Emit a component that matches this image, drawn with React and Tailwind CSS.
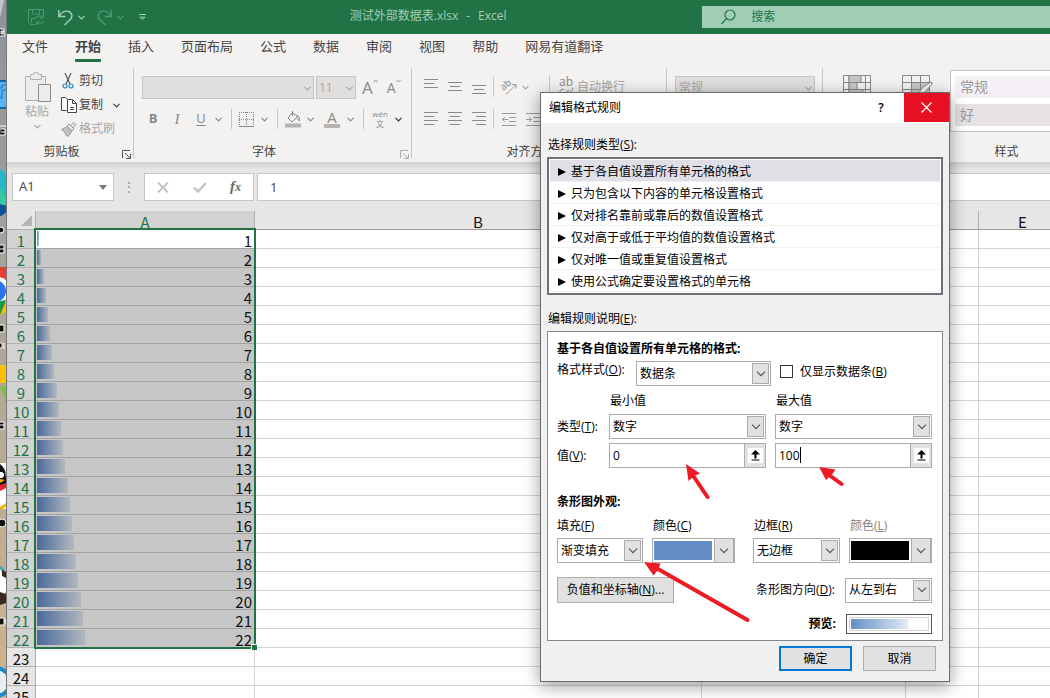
import React, { useState } from 'react';

const TABS = ['文件', '开始', '插入', '页面布局', '公式', '数据', '审阅', '视图', '帮助', '网易有道翻译'];

const COLUMNS = [
    { name: 'A', width: 'w-[219px]' },
    { name: 'B', width: 'w-[447px]' },
    { name: 'C', width: 'w-[204px]' },
    { name: 'D', width: 'w-[73px]' },
    { name: 'E', width: 'w-[88px]' },
    { name: 'F', width: 'w-[88px] hidden xl:table-cell' },
    { name: 'G', width: 'w-[88px] hidden xl:table-cell' },
    { name: 'H', width: 'w-[88px] hidden xl:table-cell' },
];

const ROWS = Array.from({ length: 25 }, (_, i) => i + 1);
const LAST_VALUE = 22;

const RULE_TYPES = [
    '基于各自值设置所有单元格的格式',
    '只为包含以下内容的单元格设置格式',
    '仅对排名靠前或靠后的数值设置格式',
    '仅对高于或低于平均值的数值设置格式',
    '仅对唯一值或重复值设置格式',
    '使用公式确定要设置格式的单元格',
];

const Chevron = ({ className = 'text-[#999]' }) => (
    <svg width="7" height="5" viewBox="0 0 7 5" className={`shrink-0 ${className}`} fill="none" stroke="currentColor" strokeWidth="1.2">
        <path d="M0.5 0.8 3.5 3.8 6.5 0.8" />
    </svg>
);

const Lines = ({ align, rows = 4 }) => {
    const widths = rows === 4 ? [14, 10, 14, 10] : [14, 10, 14];
    return (
        <svg width="14" height={rows === 4 ? 14 : 11} className="text-[#8a8a8a]" stroke="currentColor" shapeRendering="crispEdges">
            {widths.map((w, i) => {
                const x = align === 'left' ? 0 : align === 'right' ? 14 - w : (14 - w) / 2;
                return <path key={i} d={`M${x} ${i * 4 + 0.5}h${w}`} />;
            })}
        </svg>
    );
};

const Launcher = ({ className }) => (
    <svg width="9" height="9" viewBox="0 0 9 9" className={className} fill="none" stroke="currentColor">
        <path d="M0.5 8V0.5H8M3 3l5 5M8.5 4v4.5H4" />
    </svg>
);

/* Icons on the desktop that stick out left of the window */
const DesktopStrip = () => (
    <div className="w-[6px] shrink-0 overflow-hidden bg-linear-to-b from-[#8d929b] via-[#a8a39b] via-40% to-[#d0b48a]" aria-hidden="true">
        <svg width="6" height="698" viewBox="0 0 6 698">
            <path d="M0 0h4L0 18z" fill="#c4c4c6" />
            <path d="M0 29h4v2H1v3h4v2H0M2 32h3" stroke="#fff" fill="#111" />
            <path d="M0 80h6v29H0z" fill="#0b62a4" />
            <path d="M0 82h6v25H0z" fill="#58b6f2" />
            <path d="M0 88h2v-3h4M0 98h2v-8h4" stroke="#146fc0" fill="none" />
            <path d="M0 126h6M1 129h4v6H0M1 132h4" stroke="#fff" fill="#111" />
            <path d="M0 169q5 2 6 8v32H0z" fill="#28b7c8" />
            <path d="M0 187q4 8 6 10v10H0z" fill="#34c9a2" />
            <path d="M0 204q5 2 6 1v7q-3 4-6 4z" fill="#0d5299" />
            <path d="M0 227q4 0 4 3t-4 3M0 245h4v8H0M0 249h4" stroke="#fff" fill="#111" />
            <path d="M0 267h6v14H0z" fill="#e43f35" />
            <circle cx="-3" cy="291" r="14" fill="#fff" />
            <circle cx="-5" cy="291" r="11" fill="#2a75ee" />
            <path d="M0 301l6-1-4 14H0z" fill="#199746" />
            <path d="M6 301v11l-6 3z" fill="#fbbc05" />
            <path d="M0 325h4v7H0M0 343h2v5H0M4 343v6" stroke="#fff" fill="#111" />
            <path d="M0 365h6v18H0z" fill="#ffc107" />
            <path d="M0 386h6v17z" fill="#7dc242" />
            <path d="M0 422h4v7H0M0 425h4" stroke="#fff" fill="#111" />
            <path d="M0 463h6v46H0z" fill="#fff" />
            <path d="M0 464q6 4 6 14v9H0z" fill="#111" />
            <circle cx="1" cy="475" r="3" fill="#fff" />
            <path d="M0 479l5 1-5 3z" fill="#f4b400" />
            <path d="M0 485l6-2v5l-6 3z" fill="#e4252b" />
            <path d="M0 507l6-4v3l-3 3H0z" fill="#f4b400" />
            <circle cx="2" cy="523" r="4" stroke="#fff" fill="#111" />
            <circle cx="-14" cy="585" r="24" fill="#45a8b0" />
            <circle cx="-14" cy="585" r="21" fill="#fff" />
            <path d="M2 570l4 2v6l-4-2zM0 592l6 2v9l-6 2z" fill="#3a2922" />
            <path d="M0 618h4v7H0M5 619l1 5" stroke="#fff" fill="#111" />
            <circle cx="-4" cy="682" r="16" fill="#1688d0" />
            <circle cx="-4" cy="682" r="12" fill="#e9eef2" />
        </svg>
    </div>
);

const TitleBar = () => (
    <header className="flex h-[34px] shrink-0 items-center bg-[#217346] text-[#a3cfb5]">
        <div className="flex w-[147px] shrink-0 items-center pl-[21px]">
            <button aria-label="保存" className="text-[#4f9a70]">
                <svg width="16" height="16" viewBox="0 0 16 16" fill="none" stroke="currentColor">
                    <path d="M6.5 15.5h-4l-2-2V.5h15v6M4.500.5v4.500h7V.5M3.500 14V9.500h3.500M7.500 9.500a4 4 0 0 1 7-1M15 6v3h-3M15.500 12a4 4 0 0 1-7 1.500M8.500 16v-3h3" />
                </svg>
            </button>
            <button aria-label="撤消" className="ml-[14px] text-[#a3cfb5]">
                <svg width="15" height="17" viewBox="0 0 15 17" fill="none" stroke="currentColor" strokeWidth="1.4">
                    <path d="M.8 1v6.500h6.500M1 7.300C3 4 6 1.500 10 2.300c4 1 5 5 2.500 8L6.500 16" />
                </svg>
            </button>
            <Chevron className="ml-[5px] text-[#a3cfb5]" />
            <button aria-label="恢复" className="ml-[12px] text-[#4f9a70]">
                <svg width="15" height="17" viewBox="0 0 15 17" fill="none" stroke="currentColor" strokeWidth="1.4">
                    <path d="M14.200 1v6.500H7.700M14 7.300C12 4 9 1.500 5 2.300c-4 1-5 5-2.500 8L8.500 16" />
                </svg>
            </button>
            <Chevron className="ml-[5px] text-[#4f9a70]" />
            <button aria-label="自定义快速访问工具栏" className="ml-[14px]">
                <svg width="9" height="7" viewBox="0 0 9 7" fill="none" stroke="currentColor">
                    <path d="M1 .5h7M2 3.200l2.500 2.500L7 3.200z" />
                </svg>
            </button>
        </div>
        <div className="flex flex-1 justify-center gap-2 pb-[2px] text-[12px]">
            <span>测试外部数据表.xlsx</span>
            <span>-</span>
            <span>Excel</span>
        </div>
        <label className="flex h-[22px] w-1/3 shrink-0 items-center bg-[#a0cdb6] pl-[19px] text-[#217346]">
            <svg width="15" height="16" viewBox="0 0 15 16" fill="none" stroke="currentColor" strokeWidth="1.2">
                <circle cx="9" cy="6" r="5" />
                <path d="M5.500 9.500.5 15" />
            </svg>
            <input aria-label="搜索" placeholder="搜索" className="ml-[15px] min-w-0 flex-1 bg-transparent text-[12px] outline-none placeholder:text-[#217346]" />
        </label>
    </header>
);

const GroupLabel = ({ children, launcher }) => (
    <div className="flex h-[20px] items-center text-[12px] text-[#444]">
        <span className="flex-1 text-center">{children}</span>
        {launcher && <Launcher className={`mt-[4px] mr-[2px] ml-[6px] ${launcher}`} />}
    </div>
);

const Divider = ({ className }) => <div className={`w-px shrink-0 bg-[#c8c6c4] ${className}`} />;

const Ribbon = () => (
    <div className="flex h-[98px] shrink-0 overflow-hidden bg-[#f3f2f1] pt-[4px] text-[#a8a6a4]">
        <section className="flex w-[126px] shrink-0 flex-col">
            <div className="flex h-[74px] pt-[4px] pl-[16px]">
                <button className="flex w-[28px] flex-col items-center text-[12px] leading-[16px]">
                    <svg width="28" height="32" viewBox="0 0 28 32" fill="#eeecea" stroke="#b0aeac">
                        <path d="M2.500 4.500h20v24h-20z" />
                        <path d="M7.500 7.500v-5h3a2.500 2.500 0 0 1 5 0h3v5z" />
                        <path d="M15.500 12.500h12v17h-12z" stroke="#8f8d8b" />
                    </svg>
                    <span className="whitespace-nowrap">粘贴</span>
                    <Chevron className="mt-[4px] text-[#a8a6a4]" />
                </button>
                <div className="ml-[10px] flex flex-col gap-[6px] text-[12px] leading-[18px] text-[#444]">
                    <button className="flex items-center gap-[4px]">
                        <svg width="14" height="16" viewBox="0 0 14 16" fill="none" stroke="#555" strokeWidth="1.200">
                            <path d="M4 0l5 11M10 0L5 11" />
                            <circle cx="4" cy="13" r="2" stroke="#2b88c8" />
                            <circle cx="10" cy="13" r="2" stroke="#2b88c8" />
                        </svg>
                        剪切
                    </button>
                    <button className="flex items-center gap-[2px]">
                        <svg width="16" height="16" viewBox="0 0 16 16" fill="#fff" stroke="#444">
                            <path d="M5.500 13.500h-5V.5h4l2 2" />
                            <path d="M6.500 2.500h5l4 4v9h-9zM11.500 2.500v4h4M9 10.500h4M9 12.500h4" />
                        </svg>
                        复制
                        <Chevron className="ml-[8px] text-[#444]" />
                    </button>
                    <button className="flex items-center gap-[2px] text-[#a8a6a4]">
                        <svg width="16" height="15" viewBox="0 0 16 15" fill="#c4c2c0" stroke="#999">
                            <path d="M.5 7.500l5-2.500 5 5-3.500 4.500-2-1.500-1-2.500z" />
                            <path d="M6 4l2-2 5 5-2 2zM9.500 3.500l3.500-3 2 2-3 3.500z" fill="#e8e6e4" />
                        </svg>
                        格式刷
                    </button>
                </div>
            </div>
            <GroupLabel launcher="text-[#555]">剪贴板</GroupLabel>
        </section>
        <Divider className="h-[90px]" />
        <section className="flex w-[277px] shrink-0 flex-col">
            <div className="h-[74px] pt-[8px] pl-[8px]">
                <div className="flex items-center">
                    <div className="relative">
                        <select aria-label="字体" className="block h-[23px] w-[172px] appearance-none border border-[#c8c6c4] bg-[#e1dfdd]" />
                        <Chevron className="pointer-events-none absolute top-[10px] right-[3px]" />
                    </div>
                    <div className="relative ml-[2px]">
                        <select aria-label="字号" className="block h-[23px] w-[40px] appearance-none border border-[#c8c6c4] bg-[#e1dfdd] pl-[2px] text-[12px] text-[#a8a6a4]">
                            <option>11</option>
                        </select>
                        <Chevron className="pointer-events-none absolute top-[10px] right-[3px]" />
                    </div>
                    <button aria-label="增大字号" className="ml-[6px] flex items-start text-[17px] leading-[18px] text-[#888]">A<svg width="5" height="4" fill="none" stroke="currentColor"><path d="M0 3.500l2.500-2.500L5 3.500" /></svg></button>
                    <button aria-label="减小字号" className="ml-[9px] flex items-start text-[14px] leading-[18px] text-[#888]">A<svg width="5" height="4" fill="none" stroke="currentColor"><path d="M0 .5l2.500 2.500L5 .5" /></svg></button>
                </div>
                <div className="mt-[10px] flex h-[20px] items-center text-[13px] text-[#8a8886]">
                    <button className="w-[22px] font-bold">B</button>
                    <button className="ml-[2px] w-[22px] font-['Liberation_Serif',serif] text-[14px] italic">I</button>
                    <button className="ml-[2px] w-[22px] underline underline-offset-2">U</button>
                    <Chevron className="ml-[3px]" />
                    <Divider className="ml-[9px] h-[20px]" />
                    <svg className="ml-[7px]" width="15" height="15" viewBox="0 0 15 15" fill="none" stroke="#8a8886">
                        <path d="M.5 0v14M14.500 0v14M7.500 0v14M0 .5h15M0 7.500h15" strokeDasharray="1 1" />
                        <path d="M0 14.500h15" />
                    </svg>
                    <Chevron className="ml-[7px]" />
                    <Divider className="ml-[9px] h-[20px]" />
                    <svg className="ml-[7px]" width="17" height="17" viewBox="0 0 17 17" fill="none" stroke="#8a8886">
                        <path d="M7.500 1.500L3 7l4 4 5.500-5.500-5-4zM7.500 0v5M12 4q3 1 2.500 6l-3-3" />
                        <path d="M0 14.500h16" strokeWidth="4" stroke="#b5b3b1" />
                    </svg>
                    <Chevron className="ml-[5px]" />
                    <button aria-label="字体颜色" className="ml-[10px] flex h-[17px] w-[16px] items-center justify-center border-b-4 border-[#b5b3b1] text-[15px] leading-[13px]">A</button>
                    <Chevron className="ml-[7px]" />
                    <Divider className="ml-[9px] h-[20px]" />
                    <button aria-label="拼音指南" className="ml-[8px] flex w-[16px] flex-col items-center text-[8px] leading-[10px]">
                        <span>wén</span>
                        <span>文</span>
                    </button>
                    <Chevron className="ml-[7px] text-[#333]" />
                </div>
            </div>
            <GroupLabel launcher="text-[#b0aeac]">字体</GroupLabel>
        </section>
        <Divider className="h-[90px]" />
        <section className="flex w-[254px] shrink-0 flex-col">
            <div className="h-[74px] pt-[7px] pl-[12px]">
                <div className="flex h-[24px] items-center gap-[10px]">
                    <div className="pb-[5px]"><Lines align="left" rows={3} /></div>
                    <div><Lines align="center" rows={3} /></div>
                    <div className="pt-[7px]"><Lines align="center" rows={3} /></div>
                    <Divider className="-ml-[3px] h-[20px]" />
                    <svg className="-ml-[3px] overflow-visible" width="17" height="16" viewBox="0 0 17 16" fill="none" stroke="#999">
                        <text x="0" y="10" fontSize="10" fill="#888" stroke="none" transform="rotate(-40 4 8)">ab</text>
                        <path d="M5 15.500L15 5.500M11 5.500h4v4" />
                    </svg>
                    <Chevron className="-ml-[6px]" />
                    <Divider className="ml-[10px] h-[24px]" />
                    <button className="-ml-[1px] flex items-center gap-[3px] text-[12px] whitespace-nowrap">
                        <svg width="15" height="18" viewBox="0 0 15 18" className="overflow-visible" fill="none" stroke="#8a8886">
                            <text x="0" y="8" fontSize="12" fill="#8a8886" stroke="none">ab</text>
                            <path d="M5 11.500q-4-1-4 2.500t4 3M13.500 9.500q1 5-6 5M10 11.500l-3 3 3 3" />
                        </svg>
                        自动换行
                    </button>
                </div>
                <div className="mt-[8px] flex h-[24px] items-center gap-[10px]">
                    <Lines align="left" />
                    <Lines align="center" />
                    <Lines align="right" />
                    <Divider className="-ml-[3px] h-[20px]" />
                    <svg className="-ml-[2px]" width="14" height="13" fill="none" stroke="#999"><path d="M0 .5h14M7 4.500h7M7 8.500h7M0 12.500h14M6 6.500H.5M3 4L.5 6.500 3 9" /></svg>
                    <svg width="14" height="13" fill="none" stroke="#999"><path d="M0 .5h14M7 4.500h7M7 8.500h7M0 12.500h14M0 6.500h5.500M3 4l2.500 2.500L3 9" /></svg>
                </div>
            </div>
            <GroupLabel launcher="text-[#b0aeac]">对齐方式</GroupLabel>
        </section>
        <Divider className="h-[90px]" />
        <section className="flex w-[155px] shrink-0 flex-col">
            <div className="relative h-[74px] pt-[8px] pl-[8px]">
                <select aria-label="数字格式" className="block h-[23px] w-[140px] appearance-none border border-[#c8c6c4] bg-[#e1dfdd] pl-[3px] text-[12px] text-[#a8a6a4]">
                    <option>常规</option>
                </select>
                <Chevron className="pointer-events-none absolute top-[18px] right-[10px]" />
            </div>
            <GroupLabel launcher="text-[#b0aeac]">数字</GroupLabel>
        </section>
        <Divider className="h-[90px]" />
        <section className="flex w-[367px] shrink-0 flex-col">
            <div className="flex h-[74px] pt-[2px] pl-[20px]">
                <svg className="mt-[5px] shrink-0" width="28" height="28" viewBox="0 0 28 28" fill="#f3f2f1" stroke="#8a8886">
                    <path d="M.5 .5h27v27H.5z" />
                    <path d="M.5 7.500h27M.5 14.500h27M.5 21.500h27M6 .5v27M22.500 .5v27" />
                    <path d="M6 .5h12v7H6zM6 7.500h8v7H6zM6 14.500h14v7H6z" fill="#c8c6c4" />
                </svg>
                <svg className="mt-[5px] ml-[31px] shrink-0" width="31" height="28" viewBox="0 0 31 28" fill="none" stroke="#8a8886">
                    <path d="M10 8h17v14H10z" fill="#c8c6c4" stroke="none" />
                    <path d="M.5 .5h27v27H.5zM.5 7.500h27M.5 14.500h27M9.500 .5v27M18.500 .5v27" />
                    <path d="M14 22l6-9 9-6q2 0 1 2l-7 8-6 5z" fill="#f3f2f1" />
                </svg>
                <div className="ml-[17px] flex h-[62px] flex-1 flex-col gap-[6px] border border-[#c8c6c4] bg-white px-[4px] py-[5px] text-[14px] text-[#999]">
                    <button className="h-[22px] bg-[#f5f0f6] pl-[5px] text-left leading-[22px]">常规</button>
                    <button className="h-[22px] bg-[#e6e1e5] pl-[5px] text-left leading-[22px]">好</button>
                </div>
            </div>
            <GroupLabel>样式</GroupLabel>
        </section>
    </div>
);

const FormulaBar = () => (
    <div className="flex h-[49px] shrink-0 items-start bg-linear-to-b from-[#cfcfcf] to-[#e6e6e6] to-15% pt-[11px] pl-[5px] text-[13px] text-[#444]">
        <div className="flex h-[28px] w-[102px] shrink-0 items-center border border-[#c6c6c6] bg-white pr-[6px] pl-[6px]">
            <input aria-label="名称框" defaultValue="A1" className="min-w-0 flex-1 outline-none" />
            <svg width="8" height="5" fill="#777"><path d="M0 0h8L4 5z" /></svg>
        </div>
        <svg className="mx-[14px] mt-[9px] shrink-0" width="2" height="11" fill="#aaa"><path d="M0 0h2v2H0zM0 4h2v2H0zM0 9h2v2H0z" /></svg>
        <div className="flex h-[28px] w-[110px] shrink-0 items-center justify-between border border-[#c6c6c6] bg-white pr-[12px] pl-[12px]">
            <button aria-label="取消输入"><svg width="12" height="11" fill="none" stroke="#c2c2c2" strokeWidth="1.800"><path d="M1 .5l10 10M11 .5l-10 10" /></svg></button>
            <button aria-label="输入"><svg width="14" height="11" fill="none" stroke="#c2c2c2" strokeWidth="2.400"><path d="M1 5.500l4 4L13 1" /></svg></button>
            <button aria-label="插入函数" className="pb-[2px] font-['Liberation_Serif',serif] text-[15px] leading-[18px] font-bold text-[#666] italic">f<span className="text-[12px]">x</span></button>
        </div>
        <input aria-label="编辑栏" defaultValue="1" className="ml-[3px] h-[28px] min-w-0 flex-1 border border-r-0 border-[#c6c6c6] bg-white pl-[12px] outline-none" />
    </div>
);

const SheetRow = ({ n }) => {
    const selected = n <= LAST_VALUE;
    const line = selected ? 'border-b-[#a3a3a3]' : 'border-b-[#d4d4d4]';
    return (
        <tr className="h-[19px]">
            <th scope="row" className={`border-r border-b border-[#b0b0b0] p-0 pt-[3px] font-normal ${selected ? 'bg-[#d2d2d2] text-[#217346]' : 'bg-[#e6e6e6]'}`}>{n}</th>
            <td className={`relative border-r border-r-[#d4d4d4] border-b p-0 pt-[3px] pr-[2px] text-right ${line} ${selected && n > 1 ? 'bg-[#c6c6c6]' : 'bg-white'}`}>
                {selected && (
                    <>
                        <div
                            className={`absolute top-px left-px h-[15px] bg-linear-to-r ${n > 1 ? 'from-[#4a6a9a] to-[#b3b8be]' : 'from-[#638ec6] to-[#a9c1e0]'}`}
                            style={{ width: `${n}%` }}
                        />
                        <span className="relative">{n}</span>
                    </>
                )}
            </td>
            {COLUMNS.slice(1).map(({ name, width }) => (
                <td key={name} className={`border-r border-b border-[#d4d4d4] p-0 ${width}`} />
            ))}
        </tr>
    );
};

const Sheet = () => (
    <div className="relative min-h-0 flex-1 overflow-hidden bg-white">
        <table className="w-max table-auto border-separate border-spacing-0 font-['Noto_Sans_CJK_SC',sans-serif] text-[15px] leading-[15px] text-[#111]">
            <thead>
                <tr className="h-[19px]">
                    <th aria-label="全选" className="w-[29px] min-w-[29px] border-r border-b border-[#b0b0b0] bg-[#e6e6e6] p-0 pl-[14px]">
                        <svg width="11" height="11" fill="#b4b4b4"><path d="M11 0v11H0z" /></svg>
                    </th>
                    {COLUMNS.map(({ name, width }) => (
                        <th key={name} scope="col" className={`border-r border-b border-r-[#b0b0b0] border-b-[#999] p-0 pt-[3px] font-normal ${width} ${name === 'A' ? 'bg-[#d2d2d2] text-[#217346]' : 'bg-[#e6e6e6]'}`}>{name}</th>
                    ))}
                </tr>
            </thead>
            <tbody>
                {ROWS.map((n) => <SheetRow key={n} n={n} />)}
            </tbody>
        </table>
        {/* Selection frame with its fill handle */}
        <div className="pointer-events-none absolute top-[17px] left-[27px] h-[421px] w-[222px] border-2 border-[#217346]">
            <div className="absolute -right-[3px] -bottom-[3px] h-[6px] w-[6px] border-t border-l border-white bg-[#217346]" />
        </div>
    </div>
);

const DropArrow = () => (
    <svg width="10" height="6" viewBox="0 0 10 6" fill="none" stroke="#555" strokeWidth="1.200"><path d="M1 .7l4 4 4-4" /></svg>
);

const Combo = ({ id, value, className = '' }) => (
    <div className={`relative ${className}`}>
        <select id={id} className="block h-[25px] w-full appearance-none border border-[#acacac] bg-white pl-[3px] text-[12px] outline-none">
            <option>{value}</option>
        </select>
        <span className="pointer-events-none absolute top-[2px] right-[2px] flex h-[21px] w-[17px] items-center justify-center border border-[#acacac] bg-[#e1e1e1]">
            <DropArrow />
        </span>
    </div>
);

const ColorPicker = ({ id, color }) => (
    <button id={id} className="flex h-[25px] w-[83px] border border-[#acacac] bg-white">
        <span className={`m-[2px] ml-px flex-1 self-stretch ${color}`} />
        <span className="flex h-full w-[20px] items-center justify-center border-r border-l border-[#acacac] bg-[#e1e1e1]"><DropArrow /></span>
    </button>
);

const RefInput = ({ label, value, onChange }) => (
    <div className="flex h-[25px] border border-[#acacac] bg-white">
        <input aria-label={label} value={value} onChange={onChange} className="w-0 min-w-0 flex-1 pl-[3px] text-[12px] outline-none" />
        <button aria-label="选择区域" className="flex w-[21px] shrink-0 items-center justify-center border-l border-[#acacac] bg-[#e1e1e1]">
            <svg width="15" height="15" viewBox="0 0 15 15">
                <path d="M0 0h15v15H0z" fill="#fff" />
                <path d="M7.500 2L12 6.500H8.500v4h-2v-4H3z" fill="#000" />
                <path d="M3.500 12h8" stroke="#000" />
            </svg>
        </button>
    </div>
);

const RuleDialog = () => {
    const [selected, setSelected] = useState(0);
    const [min, setMin] = useState('0');
    const [max, setMax] = useState('100');

    return (
        <div role="dialog" aria-labelledby="dialog-title" className="absolute top-[92px] left-[540px] w-[410px] border border-[#6b6b6b] bg-[#f0f0f0] text-[12px] leading-[18px] text-black shadow-[0_4px_16px_rgba(0,0,0,0.4)]">
            <div className="flex h-[30px] items-start bg-white">
                <h2 id="dialog-title" className="flex-1 self-center pl-[8px]">编辑格式规则</h2>
                <button aria-label="帮助" className="h-[29px] w-[46px] font-semibold">?</button>
                <button aria-label="关闭" className="flex h-[29px] w-[45px] items-center justify-center bg-[#e81123]">
                    <svg width="11" height="11" fill="none" stroke="#fff" strokeWidth="1.200"><path d="M.5 .5l10 10M10.500 .5l-10 10" /></svg>
                </button>
            </div>

            <div className="px-[6px] pt-[13px] pb-[10px]">
                <h3 className="pl-px">选择规则类型(<u>S</u>):</h3>
                <ul className="mt-[3px] border-2 border-[#6d7178] bg-white p-px">
                    {RULE_TYPES.map((rule, i) => (
                        <li key={rule}>
                            <button
                                onClick={() => setSelected(i)}
                                className={`flex h-[22px] w-full items-center gap-[5px] border-b border-[#f0f0f0] pt-[2px] pl-[8px] ${selected === i ? 'bg-[#e0dfe5]' : ''}`}
                            >
                                <svg width="8" height="8"><path d="M0 0l8 4-8 4z" /></svg>
                                {rule}
                            </button>
                        </li>
                    ))}
                </ul>

                <h3 className="mt-[15px] pl-px">编辑规则说明(<u>E</u>):</h3>
                <div className="mt-[3px] border border-[#828790] bg-white pt-[8px] pr-[10px] pb-[6px] pl-[9px]">
                    <h4 className="font-bold">基于各自值设置所有单元格的格式:</h4>
                    <div className="mt-[3px] flex items-start">
                        <label htmlFor="style" className="w-[79px]">格式样式(<u>O</u>):</label>
                        <Combo id="style" value="数据条" className="w-[135px]" />
                        <input id="only-bar" type="checkbox" className="mt-[4px] ml-[9px] h-[13px] w-[13px] appearance-none border border-[#333] bg-white checked:bg-[#0078d7]" />
                        <label htmlFor="only-bar" className="mt-[2px] ml-[7px]">仅显示数据条(<u>B</u>)</label>
                    </div>

                    <div className="mt-[6px] grid grid-cols-[43px_minmax(0,1fr)_minmax(0,1fr)] items-center gap-x-[9px] gap-y-[4px]">
                        <span />
                        <span className="pl-px">最小值</span>
                        <span className="pl-px">最大值</span>
                        <label htmlFor="min-type" className="whitespace-nowrap">类型(<u>T</u>):</label>
                        <Combo id="min-type" value="数字" />
                        <Combo id="max-type" value="数字" />
                        <span>值(<u>V</u>):</span>
                        <RefInput label="最小值" value={min} onChange={(e) => setMin(e.target.value)} />
                        <div className="relative">
                            <RefInput label="最大值" value={max} onChange={(e) => setMax(e.target.value)} />
                            <span className="pointer-events-none absolute top-[4px] left-[25px] h-[16px] w-px bg-black" />
                        </div>
                    </div>

                    <h4 className="mt-[25px] font-bold">条形图外观:</h4>
                    <div className="mt-[6px] flex justify-between">
                        <div className="flex gap-[9px]">
                            <div className="flex w-[86px] flex-col gap-[3px]">
                                <label htmlFor="fill">填充(<u>F</u>)</label>
                                <Combo id="fill" value="渐变填充" />
                            </div>
                            <div className="flex flex-col gap-[3px]">
                                <label htmlFor="fill-color" className="pl-px">颜色(<u>C</u>)</label>
                                <ColorPicker id="fill-color" color="bg-[#638ec6]" />
                            </div>
                        </div>
                        <div className="flex gap-[9px]">
                            <div className="flex w-[87px] flex-col gap-[3px]">
                                <label htmlFor="border" className="pl-px">边框(<u>R</u>)</label>
                                <Combo id="border" value="无边框" />
                            </div>
                            <div className="flex flex-col gap-[3px]">
                                <label htmlFor="border-color" className="pl-px text-[#838383]">颜色(<u>L</u>)</label>
                                <ColorPicker id="border-color" color="bg-black" />
                            </div>
                        </div>
                    </div>

                    <div className="mt-[14px] flex items-center">
                        <button className="h-[26px] w-[117px] border border-[#adadad] bg-[#e1e1e1]">负值和坐标轴(<u>N</u>)...</button>
                        <label htmlFor="direction" className="ml-auto">条形图方向(<u>D</u>):</label>
                        <Combo id="direction" value="从左到右" className="ml-[10px] w-[87px]" />
                    </div>
                    <div className="mt-[11px] flex h-[20px] items-center justify-end gap-[10px]">
                        <span className="font-bold">预览:</span>
                        <div className="h-[20px] w-[86px] border border-[#555] p-[2px]">
                            <div className="h-full border border-[#d4d4d4] p-px">
                                <div className="h-full w-3/4 bg-linear-to-r from-[#638ec6] to-[#e4ecf5]" />
                            </div>
                        </div>
                    </div>
                </div>

                <div className="mt-[5px] mr-[7px] flex justify-end gap-[11px]">
                    <button className="h-[25px] w-[73px] border-2 border-[#0078d7] bg-[#e1e1e1]">确定</button>
                    <button className="h-[25px] w-[73px] border border-[#adadad] bg-[#e1e1e1]">取消</button>
                </div>
            </div>

            {/* Hand-drawn pointers over the fields */}
            <svg className="pointer-events-none absolute top-0 left-0" width="408" height="588" viewBox="541 93 408 588" fill="#ed1c24" stroke="#ed1c24" strokeLinecap="round">
                <path d="M694 477L707.500 497M829 475L841.500 484M658 569L747.500 620" strokeWidth="4" />
                <path d="M686 464L700 473.500 695 475.500 688.500 481zM819 467L835.500 469.500 832 474.500 826 480zM644 562L660.500 563.500 658 570 653.500 575.500z" stroke="none" />
            </svg>
        </div>
    );
};

export default function App() {
    const [tab, setTab] = useState('开始');

    return (
        <div className="relative flex h-screen overflow-hidden font-['Open_Sans','Noto_Sans_CJK_SC',sans-serif]">
            <DesktopStrip />
            <main className="flex min-w-0 flex-1 flex-col border-l border-[#777]">
                <TitleBar />
                <nav className="flex h-[30px] shrink-0 gap-[27px] bg-[#f3f2f1] pl-[15px] text-[13px] text-[#444]">
                    {TABS.map((name) => (
                        <button
                            key={name}
                            onClick={() => setTab(name)}
                            className={`h-[28px] border-b-3 whitespace-nowrap ${tab === name ? 'border-[#217346] font-bold' : 'border-transparent'}`}
                        >
                            {name}
                        </button>
                    ))}
                </nav>
                <Ribbon />
                <FormulaBar />
                <Sheet />
            </main>
            <RuleDialog />
        </div>
    );
}
